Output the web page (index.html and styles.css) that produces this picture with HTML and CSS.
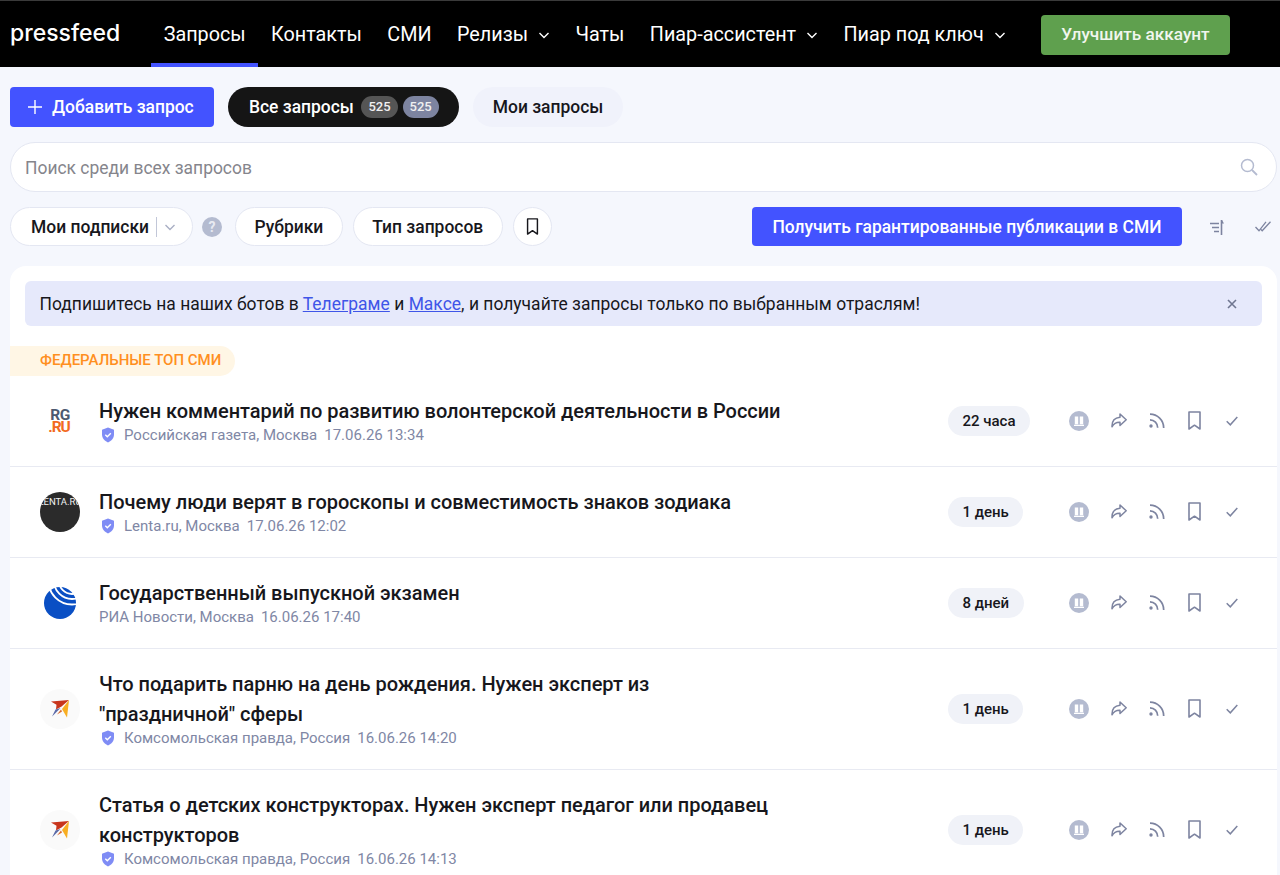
FILE: index.html
```html
<!DOCTYPE html>
<html lang="ru">
<head>
    <meta charset="UTF-8">
    <meta name="viewport" content="width=device-width, initial-scale=1.0">
    <title>Pressfeed - Запросы</title>
    <link rel="stylesheet" href="styles.css">
</head>
<body>
    <svg class="sprite" width="0" height="0">
        <symbol id="i-chevron" viewBox="0 0 12 12"><path d="M1.500 4l4.500 4.500L10.500 4" fill="none" stroke="currentColor" stroke-width="1.400"/></symbol>
        <symbol id="i-shield" viewBox="0 0 14 16"><path d="M7 .6l6 2.200v4.700c0 3.700-2.500 6.400-6 7.900-3.500-1.500-6-4.200-6-7.900V2.800z" fill="#7f8cf5"/><path d="M4.300 7.800l2 2 3.500-3.500" fill="none" stroke="#fff" stroke-width="1.400"/></symbol>
        <symbol id="i-pause" viewBox="0 0 20 20"><circle cx="10" cy="10" r="10" fill="#b4bbd0"/><path d="M5.800 5.500h3.400v7.800H5.800zM10.800 5.500h3.400v7.800h-3.400zM5 13.800h10v1.200H5z" fill="#fff"/></symbol>
        <symbol id="i-share" viewBox="0 0 16 15"><path d="M9 1l6.200 5.800L9 12.500V9.300C5.700 9.100 3 10.300 1 13.800 .8 8.500 3.500 4.800 9 4.300z" fill="none" stroke="#7d84a0" stroke-width="1.500" stroke-linejoin="round"/></symbol>
        <symbol id="i-rss" viewBox="0 0 16 15"><circle cx="2" cy="13" r="1.700" fill="#7d84a0"/><path d="M1 6.800c4.300 0 7.700 3.400 7.700 8M1 1.200c7.500 0 13.700 6 13.700 13.800" fill="none" stroke="#7d84a0" stroke-width="1.700"/></symbol>
        <symbol id="i-mark" viewBox="0 0 13 19"><path d="M1 1h11v17l-5.500-3.800L1 18z" fill="none" stroke="currentColor" stroke-width="1.600" stroke-linejoin="round"/></symbol>
        <symbol id="i-check" viewBox="0 0 12 10"><path d="M.7 5.200l3.600 3.600L11.300 1" fill="none" stroke="#7d84a0" stroke-width="1.500"/></symbol>
        <symbol id="i-bird" viewBox="0 0 18 18">
            <path d="M18 0L0 1.500l5.500 3.200-.5 4.800 5.500-3z" fill="#c8351c"/>
            <path d="M18 0l-2 17.500-5-8.500z" fill="#f8ae22"/>
            <path d="M9.500 8L1 16.500l3.500-7z" fill="#5a6aa8"/>
            <path d="M10 9.500l-4 5 5-3z" fill="#d9662a"/>
        </symbol>
    </svg>

    <header class="topbar">
        <div class="logo">pressfeed</div>
        <nav class="menu">
            <a class="menu-item active">Запросы</a>
            <a class="menu-item">Контакты</a>
            <a class="menu-item">СМИ</a>
            <a class="menu-item">Релизы <svg class="chevron"><use href="#i-chevron"/></svg></a>
            <a class="menu-item">Чаты</a>
            <a class="menu-item">Пиар-ассистент <svg class="chevron"><use href="#i-chevron"/></svg></a>
            <a class="menu-item">Пиар под ключ <svg class="chevron"><use href="#i-chevron"/></svg></a>
        </nav>
        <a class="upgrade">Улучшить аккаунт</a>
    </header>

    <main class="page">
        <div class="tabs">
            <a class="btn-add"><svg class="plus" viewBox="0 0 14 14"><path d="M7 0v14M0 7h14" stroke="#fff" stroke-width="1.400"/></svg>Добавить запрос</a>
            <a class="tab tab-dark">Все запросы <span class="count">525</span><span class="count count-light">525</span></a>
            <a class="tab tab-light">Мои запросы</a>
        </div>

        <div class="search">
            <span class="search-text">Поиск среди всех запросов</span>
            <svg class="search-icon" viewBox="0 0 18 18"><circle cx="7.500" cy="7.500" r="6" fill="none" stroke="#b4bbd0" stroke-width="1.500"/><path d="M12 12l5 5" stroke="#b4bbd0" stroke-width="1.800"/></svg>
        </div>

        <div class="filters">
            <a class="chip chip-subs">Мои подписки<span class="chip-sep"></span><svg class="chip-chevron"><use href="#i-chevron"/></svg></a>
            <span class="help">?</span>
            <a class="chip">Рубрики</a>
            <a class="chip">Тип запросов</a>
            <a class="chip chip-icon"><svg class="chip-mark"><use href="#i-mark"/></svg></a>
            <a class="btn-guarantee">Получить гарантированные публикации в СМИ</a>
            <svg class="tool tool-sort" viewBox="0 0 14 16"><path d="M0 4.500h9M2 8.500h7M4 12.500h5" stroke="#7d84a0" stroke-width="1.500"/><path d="M11.500 16V1" stroke="#7d84a0" stroke-width="1.600"/><path d="M12 1l2 3.500h-2z" fill="#7d84a0"/></svg>
            <svg class="tool tool-read" viewBox="0 0 16 11"><path d="M.5 6L4 9.800 11 .8M6 8.500L7.200 9.800 15.500 .8" fill="none" stroke="#7d84a0" stroke-width="1.300"/></svg>
        </div>

        <section class="card">
            <div class="notice">
                <p>Подпишитесь на наших ботов в <a href="#">Телеграме</a> и <a href="#">Максе</a>, и получайте запросы только по выбранным отраслям!</p>
                <svg class="notice-close" viewBox="0 0 10 10"><path d="M1 1l8 8M9 1l-8 8" stroke="#6f7690" stroke-width="1.600"/></svg>
            </div>

            <div class="tag">ФЕДЕРАЛЬНЫЕ ТОП СМИ</div>

            <article class="row">
                <div class="avatar avatar-rg"><span class="rg-top">RG</span><span class="rg-ru">.RU</span></div>
                <div class="row-body">
                    <h3>Нужен комментарий по развитию волонтерской деятельности в России</h3>
                    <div class="meta"><svg class="shield"><use href="#i-shield"/></svg>Российская газета, Москва <time>17.06.26 13:34</time></div>
                </div>
                <div class="row-time"><span class="age">22 часа</span></div>
                <div class="row-actions">
                    <svg class="act act-pause"><use href="#i-pause"/></svg>
                    <svg class="act act-share"><use href="#i-share"/></svg>
                    <svg class="act act-rss"><use href="#i-rss"/></svg>
                    <svg class="act act-mark"><use href="#i-mark"/></svg>
                    <svg class="act act-check"><use href="#i-check"/></svg>
                </div>
            </article>

            <article class="row">
                <div class="avatar avatar-lenta"><span>LENTA.RU</span></div>
                <div class="row-body">
                    <h3>Почему люди верят в гороскопы и совместимость знаков зодиака</h3>
                    <div class="meta"><svg class="shield"><use href="#i-shield"/></svg>Lenta.ru, Москва <time>17.06.26 12:02</time></div>
                </div>
                <div class="row-time"><span class="age">1 день</span></div>
                <div class="row-actions">
                    <svg class="act act-pause"><use href="#i-pause"/></svg>
                    <svg class="act act-share"><use href="#i-share"/></svg>
                    <svg class="act act-rss"><use href="#i-rss"/></svg>
                    <svg class="act act-mark"><use href="#i-mark"/></svg>
                    <svg class="act act-check"><use href="#i-check"/></svg>
                </div>
            </article>

            <article class="row">
                <div class="avatar">
                    <svg class="ria" viewBox="0 0 32 32">
                        <circle cx="16" cy="16" r="16" fill="#0a4fc4"/>
                        <g fill="none" stroke="#fff" stroke-width="1.800">
                            <circle cx="28" cy="-6" r="13"/>
                            <circle cx="28" cy="-6" r="18"/>
                            <circle cx="28" cy="-6" r="23.500"/>
                        </g>
                    </svg>
                </div>
                <div class="row-body">
                    <h3>Государственный выпускной экзамен</h3>
                    <div class="meta">РИА Новости, Москва <time>16.06.26 17:40</time></div>
                </div>
                <div class="row-time"><span class="age">8 дней</span></div>
                <div class="row-actions">
                    <svg class="act act-pause"><use href="#i-pause"/></svg>
                    <svg class="act act-share"><use href="#i-share"/></svg>
                    <svg class="act act-rss"><use href="#i-rss"/></svg>
                    <svg class="act act-mark"><use href="#i-mark"/></svg>
                    <svg class="act act-check"><use href="#i-check"/></svg>
                </div>
            </article>

            <article class="row">
                <div class="avatar avatar-kp"><svg class="bird"><use href="#i-bird"/></svg></div>
                <div class="row-body">
                    <h3>Что подарить парню на день рождения. Нужен эксперт из "праздничной" сферы</h3>
                    <div class="meta"><svg class="shield"><use href="#i-shield"/></svg>Комсомольская правда, Россия <time>16.06.26 14:20</time></div>
                </div>
                <div class="row-time"><span class="age">1 день</span></div>
                <div class="row-actions">
                    <svg class="act act-pause"><use href="#i-pause"/></svg>
                    <svg class="act act-share"><use href="#i-share"/></svg>
                    <svg class="act act-rss"><use href="#i-rss"/></svg>
                    <svg class="act act-mark"><use href="#i-mark"/></svg>
                    <svg class="act act-check"><use href="#i-check"/></svg>
                </div>
            </article>

            <article class="row">
                <div class="avatar avatar-kp"><svg class="bird"><use href="#i-bird"/></svg></div>
                <div class="row-body">
                    <h3>Статья о детских конструкторах. Нужен эксперт педагог или продавец конструкторов</h3>
                    <div class="meta"><svg class="shield"><use href="#i-shield"/></svg>Комсомольская правда, Россия <time>16.06.26 14:13</time></div>
                </div>
                <div class="row-time"><span class="age">1 день</span></div>
                <div class="row-actions">
                    <svg class="act act-pause"><use href="#i-pause"/></svg>
                    <svg class="act act-share"><use href="#i-share"/></svg>
                    <svg class="act act-rss"><use href="#i-rss"/></svg>
                    <svg class="act act-mark"><use href="#i-mark"/></svg>
                    <svg class="act act-check"><use href="#i-check"/></svg>
                </div>
            </article>
        </section>
    </main>
</body>
</html>
```

FILE: styles.css
```css
* {
    box-sizing: border-box;
}
html, body {
    height: 875px;
    overflow: hidden;
}
body {
    margin: 0;
    font-family: Roboto, "Liberation Sans", sans-serif;
    background-color: #f5f7fd;
    color: #17171c;
}
a {
    cursor: pointer;
}
.sprite {
    position: absolute;
}

/* header */
.topbar {
    display: flex;
    align-items: stretch;
    height: 67px;
    padding: 0 0 0 10px;
    background: #000;
    border-top: 1px solid #3a3a3a;
    color: #fff;
}
.logo {
    width: 141px;
    padding-top: 17px;
    font-family: Inter, sans-serif;
    font-size: 23px;
    font-weight: 500;
    line-height: 30px;
}
.menu {
    display: flex;
}
.menu-item {
    display: flex;
    align-items: center;
    gap: 10px;
    padding: 5px 12.700px 0;
    font-size: 19.800px;
    border-bottom: 4px solid transparent;
}
.menu-item.active {
    border-bottom-color: #4353ff;
}
.chevron {
    width: 12px;
    height: 12px;
}
.upgrade {
    align-self: flex-start;
    margin: 14px 0 0 23px;
    padding: 0 20px;
    height: 40px;
    line-height: 38px;
    font-size: 17.200px;
    font-weight: 500;
    color: #f1f6ee;
    background: #5fa04e;
    border-radius: 4px;
}

.page {
    padding: 20px 3px 0 10px;
}

/* tabs */
.tabs {
    display: flex;
    gap: 14px;
    height: 40px;
}
.btn-add {
    display: flex;
    align-items: center;
    width: 204px;
    padding-left: 18px;
    font-size: 17.450px;
    font-weight: 500;
    color: #fff;
    background: #4353ff;
    border-radius: 4px;
}
.plus {
    width: 14px;
    height: 14px;
    margin-right: 10px;
}
.tab {
    display: flex;
    align-items: center;
    padding: 0 20px;
    font-size: 17.450px;
    font-weight: 500;
    border-radius: 20px;
}
.tab-dark {
    color: #fff;
    background: #151515;
    padding-left: 21px;
}
.tab-light {
    background: #f0f2fb;
}
.count {
    margin-left: 7.500px;
    padding: 0 7px;
    height: 22px;
    line-height: 21px;
    font-size: 13px;
    color: #f0f0f0;
    background: #555;
    border-radius: 11px;
}
.count-light {
    margin-left: 5px;
    background: #7d84a0;
}

/* search */
.search {
    display: flex;
    align-items: center;
    justify-content: space-between;
    height: 50px;
    margin-top: 15px;
    padding: 0 18px 0 14px;
    font-size: 17.450px;
    color: #85858c;
    background: #fff;
    border: 1px solid #e4e7f2;
    border-radius: 25px;
}
.search-text {
    padding-top: 1px;
}
.search-icon {
    width: 18px;
    height: 18px;
}

/* filters */
.filters {
    display: flex;
    align-items: center;
    height: 39px;
    margin-top: 15px;
}
.chip {
    display: flex;
    align-items: center;
    height: 39px;
    margin-right: 10px;
    padding: 0 18.500px;
    font-size: 17.450px;
    font-weight: 500;
    background: #fff;
    border: 1px solid #e4e7f2;
    border-radius: 20px;
}
.chip-subs {
    width: 183px;
    padding-left: 20px;
    padding-right: 0;
    margin-right: 9px;
}
.chip-sep {
    width: 1px;
    height: 20px;
    margin-left: 7px;
    background: #c2c7d8;
}
.chip-chevron {
    width: 12px;
    height: 12px;
    margin-left: 7px;
    color: #a9afc4;
}
.help {
    width: 20px;
    height: 20px;
    margin-right: 13px;
    line-height: 20px;
    text-align: center;
    font-size: 14px;
    font-weight: 700;
    color: #e8eaf2;
    background: #b4bbd0;
    border-radius: 50%;
}
.chip-icon {
    width: 39px;
    padding: 0;
    justify-content: center;
}
.chip-mark {
    width: 13px;
    height: 17px;
    color: #17171c;
}
.btn-guarantee {
    display: flex;
    align-items: center;
    height: 39px;
    margin-left: auto;
    padding: 0 20.500px;
    font-size: 17.450px;
    font-weight: 500;
    color: #fff;
    background: #4353ff;
    border-radius: 4px;
}
.tool {
    flex: none;
}
.tool-sort {
    width: 14px;
    height: 16px;
    margin-left: 28px;
}
.tool-read {
    width: 16px;
    height: 11px;
    margin-left: 31px;
    margin-right: 6px;
}

/* card */
.card {
    margin-top: 20px;
    padding-top: 15px;
    background: #fff;
    border-radius: 16px 16px 0 0;
}
.notice {
    display: flex;
    align-items: center;
    justify-content: space-between;
    height: 45px;
    margin: 0 15px;
    padding: 0 25px 0 14.500px;
    background: #e6e9fb;
    border-radius: 6px;
}
.notice p {
    margin: 0;
    font-size: 17.450px;
    letter-spacing: .02px;
}
.notice a {
    color: #3f55e8;
}
.notice-close {
    width: 10px;
    height: 10px;
}
.tag {
    width: 225px;
    height: 30px;
    margin-top: 20px;
    padding-left: 30px;
    line-height: 29px;
    font-size: 15px;
    font-weight: 500;
    color: #ff8f1f;
    background: #fff6e5;
    border-radius: 0 15px 15px 0;
}

/* rows */
.row {
    display: flex;
    align-items: center;
    padding: 20px 0 21px 30px;
    border-bottom: 1px solid #e8eaf2;
}
.avatar {
    display: flex;
    align-items: center;
    justify-content: center;
    flex: none;
    width: 40px;
    height: 40px;
    margin-right: 19px;
    border-radius: 50%;
}
.avatar-rg {
    flex-direction: column;
    font-size: 15.500px;
    font-weight: 700;
    line-height: 12px;
    letter-spacing: -.5px;
    color: #4d5a70;
}
.rg-ru {
    color: #f26a21;
    letter-spacing: -1px;
    margin-left: -2px;
}
.avatar-lenta {
    overflow: hidden;
    align-items: flex-start;
    padding-top: 4px;
    font-size: 9.500px;
    white-space: nowrap;
    color: #f2f2f2;
    background: #2b2b2b;
}
.ria {
    width: 32px;
    height: 32px;
}
.avatar-kp {
    background: #fafafa;
}
.bird {
    width: 18px;
    height: 18px;
}
.row-body {
    flex: none;
    width: 690px;
}
.row-body h3 {
    margin: 0;
    max-width: 683px;
    font-size: 20px;
    font-weight: 500;
    line-height: 30px;
    letter-spacing: -.03px;
}
.meta {
    display: flex;
    align-items: center;
    height: 20px;
    margin-top: -1px;
    font-size: 15px;
    color: #8087a5;
}
.meta time {
    margin-left: 7px;
}
.shield {
    width: 14px;
    height: 16px;
    margin: 0 9px 0 2px;
}
.row-time {
    flex: none;
    width: 120px;
    margin-left: 159px;
}
.age {
    display: inline-block;
    height: 30px;
    padding: 0 14.500px;
    line-height: 30px;
    font-size: 15px;
    font-weight: 500;
    background: #f0f2f8;
    border-radius: 15px;
}
.row-actions {
    display: flex;
    align-items: center;
    flex: none;
}
.act {
    flex: none;
}
.act-pause {
    width: 20px;
    height: 20px;
    margin-left: 1px;
}
.act-share {
    width: 16px;
    height: 15px;
    margin-left: 22px;
}
.act-rss {
    width: 16px;
    height: 15px;
    margin-left: 22px;
}
.act-mark {
    width: 13px;
    height: 19px;
    margin-left: 23px;
    color: #7d84a0;
}
.act-check {
    width: 12px;
    height: 10px;
    margin-left: 25px;
}
```
